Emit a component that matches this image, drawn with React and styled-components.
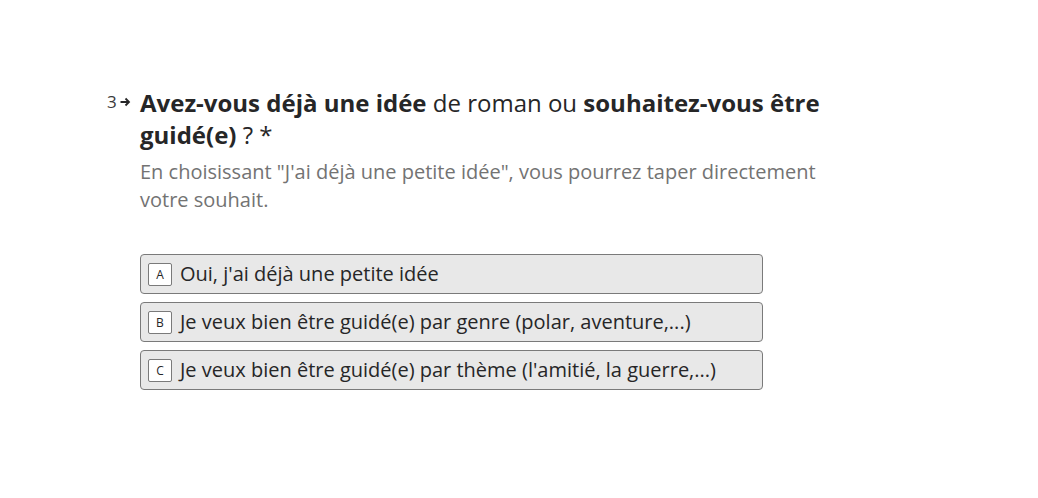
import React from "react";
import styled, { createGlobalStyle } from "styled-components";

const Global = createGlobalStyle`
  html, body { margin: 0; padding: 0; background: #ffffff; }
  body { font-family: "Open Sans", "Noto Sans", sans-serif; }
`;

const Page = styled.div`
  width: 1038px;
  height: 498px;
  box-sizing: border-box;
  padding: 87px 0 0 107px;
  background: #fff;
`;

const Question = styled.div`
  display: flex;
  align-items: flex-start;
`;

const Counter = styled.div`
  width: 33px;
  flex: none;
  display: flex;
  align-items: center;
  gap: 3px;
  padding-top: 5px;
  font-size: 17px;
  line-height: 20px;
  color: #3a3a3b;
`;

const Body = styled.div`
  width: 700px;
`;

const Title = styled.h1`
  margin: 0;
  font-size: 24px;
  line-height: 32px;
  font-weight: 400;
  color: #262627;
  strong { font-weight: 700; }
`;

const Description = styled.p`
  margin: 7px 0 0;
  font-size: 20px;
  line-height: 28px;
  color: #737373;
`;

const Options = styled.div`
  margin-top: 40px;
  display: flex;
  flex-direction: column;
  gap: 8px;
  width: 623px;
`;

const Option = styled.button`
  display: flex;
  align-items: center;
  gap: 8px;
  height: 40px;
  box-sizing: border-box;
  padding: 0 7px;
  background: #e8e8e8;
  border: 1px solid #7a7a7a;
  border-radius: 4px;
  font-family: inherit;
  font-size: 20px;
  color: #262627;
  text-align: left;
  cursor: pointer;
`;

const Key = styled.span`
  width: 24px;
  height: 23px;
  box-sizing: border-box;
  flex: none;
  display: flex;
  align-items: center;
  justify-content: center;
  background: #fff;
  border: 1px solid #7a7a7a;
  border-radius: 2px;
  font-size: 12px;
  color: #262627;
`;

const Label = styled.span`
  line-height: 28px;
`;

const Arrow = () => (
  <svg width="11" height="10" viewBox="0 0 11 10" aria-hidden="true">
    <path d="M0.5 5 H8.5 M5.5 1.5 L9 5 L5.5 8.5" fill="none" stroke="#262627" strokeWidth="1.8" />
  </svg>
);

const options = [
  { key: "A", label: "Oui, j'ai déjà une petite idée" },
  { key: "B", label: "Je veux bien être guidé(e) par genre (polar, aventure,...)" },
  { key: "C", label: "Je veux bien être guidé(e) par thème (l'amitié, la guerre,...)" },
];

export default function App() {
  return (
    <>
      <Global />
      <Page>
        <Question>
          <Counter>
            <span>3</span>
            <Arrow />
          </Counter>
          <Body>
            <Title>
              <strong>Avez-vous déjà une idée</strong> de roman ou <strong>souhaitez-vous être guidé(e)</strong> ? *
            </Title>
            <Description>
              En choisissant "J'ai déjà une petite idée", vous pourrez taper directement votre souhait.
            </Description>
            <Options>
              {options.map((o) => (
                <Option key={o.key}>
                  <Key>{o.key}</Key>
                  <Label>{o.label}</Label>
                </Option>
              ))}
            </Options>
          </Body>
        </Question>
      </Page>
    </>
  );
}
